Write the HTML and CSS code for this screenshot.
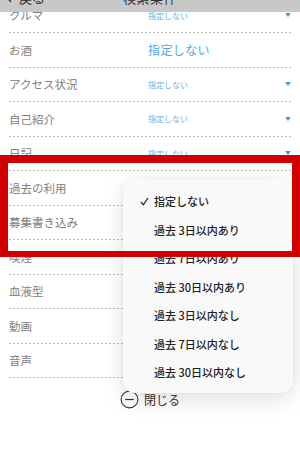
FILE: index.html
```html
<!DOCTYPE html>
<html lang="ja">
<head>
<meta charset="utf-8">
<title>検索条件</title>
<link rel="stylesheet" href="styles.css">
</head>
<body>
<div class="screen">
  <ul class="list">
    <li class="row"><span class="label">クルマ</span><span class="value">指定しない</span><span class="caret"></span></li>
    <li class="row"><span class="label">お酒</span><span class="value big">指定しない</span><span></span></li>
    <li class="row"><span class="label">アクセス状況</span><span class="value">指定しない</span><span class="caret"></span></li>
    <li class="row"><span class="label">自己紹介</span><span class="value">指定しない</span><span class="caret"></span></li>
    <li class="row"><span class="label">日記</span><span class="value">指定しない</span><span class="caret"></span></li>
    <li class="row"><span class="label">過去の利用</span><span class="value">指定しない</span><span class="caret"></span></li>
    <li class="row"><span class="label">募集書き込み</span><span class="value">指定しない</span><span class="caret"></span></li>
    <li class="row"><span class="label">喫煙</span><span class="value">指定しない</span><span class="caret"></span></li>
    <li class="row"><span class="label">血液型</span><span class="value">指定しない</span><span class="caret"></span></li>
    <li class="row"><span class="label">動画</span><span class="value">指定しない</span><span class="caret"></span></li>
    <li class="row"><span class="label">音声</span><span class="value">指定しない</span><span class="caret"></span></li>
  </ul>
  <div class="close">
    <svg class="close-icon" width="19" height="19" viewBox="0 0 19 19"><circle cx="9.5" cy="9.5" r="8.4" fill="none" stroke="#333" stroke-width="1.1"/><line x1="5.2" y1="9.5" x2="13.8" y2="9.5" stroke="#333" stroke-width="1.2"/></svg>
    <span>閉じる</span>
  </div>

  <div class="navbar">
    <div class="nav-inner">
      <span class="back"><svg width="8" height="12" viewBox="0 0 8 12"><polyline points="6,1 1.5,6 6,11" fill="none" stroke="#333" stroke-width="1.4"/></svg>戻る</span>
      <span class="title">検索条件</span>
    </div>
  </div>

  <div class="menu">
    <div class="item"><span class="check"><svg width="9" height="9" viewBox="0 0 9 9"><polyline points="1,5 3.4,7.8 8,1" fill="none" stroke="#222" stroke-width="1.3"/></svg></span><span>指定しない</span></div>
    <div class="item"><span class="check"></span><span>過去 3日以内あり</span></div>
    <div class="item"><span class="check"></span><span>過去 7日以内あり</span></div>
    <div class="item"><span class="check"></span><span>過去 30日以内あり</span></div>
    <div class="item"><span class="check"></span><span>過去 3日以内なし</span></div>
    <div class="item"><span class="check"></span><span>過去 7日以内なし</span></div>
    <div class="item"><span class="check"></span><span>過去 30日以内なし</span></div>
  </div>

  <div class="highlight"></div>
</div>
</body>
</html>
```
FILE: styles.css
```css
* { box-sizing: border-box; }
html, body {
  margin: 0;
  padding: 0;
  background: #fff;
}
body {
  font-family: "Noto Sans CJK JP", "Noto Sans", sans-serif;
  width: 300px;
  height: 450px;
  overflow: hidden;
}
.screen {
  position: relative;
  width: 300px;
  height: 450px;
  overflow: hidden;
}
.navbar {
  position: absolute;
  top: 0;
  left: 0;
  width: 300px;
  height: 12px;
  background: #c8c8c8;
  overflow: hidden;
}
.nav-inner {
  position: relative;
  height: 20px;
  margin-top: -13px;
  display: flex;
  align-items: center;
  justify-content: center;
  font-size: 13px;
  color: #333;
}
.back {
  position: absolute;
  left: 5px;
  top: 0;
  height: 20px;
  display: flex;
  align-items: center;
  gap: 6px;
}
.title {
  letter-spacing: 0.5px;
}
.list {
  list-style: none;
  margin: -1.5px 9px 0;
  padding: 0;
}
.row {
  height: 34.5px;
  display: grid;
  grid-template-columns: 139px 1fr auto;
  align-items: center;
  background: repeating-linear-gradient(90deg, #bbb 0 2px, transparent 2px 4px) left bottom / 100% 1px no-repeat;
  padding-bottom: 1px;
}
.label {
  font-size: 11.5px;
  color: #808080;
  white-space: nowrap;
}
.value {
  font-size: 8px;
  color: #66b2ec;
  white-space: nowrap;
}
.value.big {
  font-size: 12px;
  color: #4fa6e8;
  letter-spacing: 0.4px;
}
.caret {
  width: 0;
  height: 0;
  border-left: 3px solid transparent;
  border-right: 3px solid transparent;
  border-top: 4px solid #3f9de0;
}
.close {
  display: flex;
  justify-content: center;
  align-items: center;
  gap: 5px;
  margin-top: 12px;
  height: 19px;
  font-size: 12px;
  color: #333;
}
.close-icon {
  display: block;
}
.menu {
  position: absolute;
  left: 123px;
  top: 179px;
  width: 170px;
  padding: 8px 0 6px;
  background: #f9f9f9;
  border-radius: 12px;
  box-shadow: 0 6px 22px rgba(0, 0, 0, 0.13), 0 0 4px rgba(0, 0, 0, 0.04);
}
.item {
  height: 28.5px;
  display: flex;
  align-items: center;
  padding-left: 17px;
  font-size: 11px;
  color: #222;
  font-weight: 500;
  white-space: nowrap;
}
.check {
  width: 14px;
  display: flex;
  align-items: center;
}
.highlight {
  position: absolute;
  left: 0;
  top: 155px;
  width: 300px;
  height: 102px;
  border: 8px solid #d10000;
  border-bottom-width: 6px;
}
```
